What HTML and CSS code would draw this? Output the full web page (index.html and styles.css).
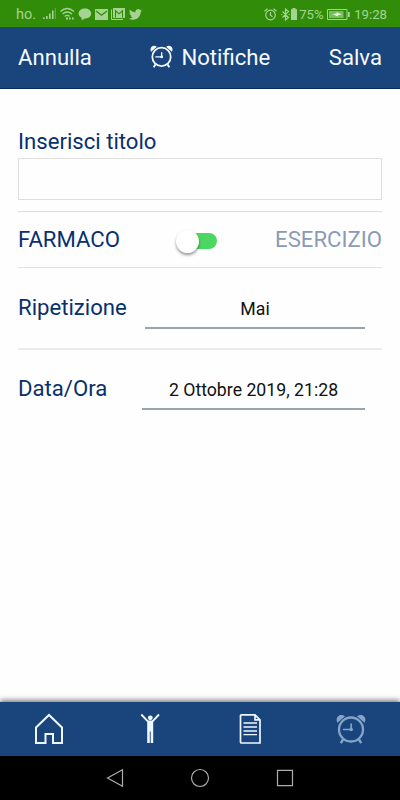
FILE: index.html
```html
<!DOCTYPE html>
<html lang="it">
<head>
<meta charset="utf-8">
<title>Notifiche</title>
<link rel="stylesheet" href="styles.css">
</head>
<body>
<svg class="defs" width="0" height="0">
  <symbol id="alarm" viewBox="0 0 30 30">
    <circle cx="15" cy="15.5" r="12" fill="none" stroke="currentColor" stroke-width="2.3"/>
    <path d="M15.2 9.5v6H7" fill="none" stroke="currentColor" stroke-width="1.7"/>
    <circle cx="15.2" cy="15.5" r="1.8" fill="currentColor"/>
    <path d="M1.500 8.800C-1.500 3.500 4 -1.500 9 2.200ZM28.500 8.800C31.500 3.500 26 -1.500 21 2.200Z" fill="currentColor"/>
    <path d="M7 25.5l-2.200 3.600M23 25.5l2.200 3.600" stroke="currentColor" stroke-width="2.4"/>
  </symbol>
</svg>
<div class="screen">
  <div class="status">
    <span class="carrier">ho.</span>
    <svg class="signal" width="14" height="12" viewBox="0 0 14 12" fill="currentColor"><path d="M0 9.5h1.6V11H0zM3 8h1.6v3H3zM6 5.5h1.6V11H6zM9 2.5h1.6V11H9z"/><path d="M11.8 0h1V11h-1z" opacity=".5"/></svg>
    <svg class="wifi" width="16" height="14" viewBox="0 0 16 14" fill="none" stroke="currentColor" stroke-width="1.4"><path d="M.5 4.5Q7 -1.5 14 4.5M2.6 7Q7 3 12 7M4.8 9.4Q7 7.4 9.6 9.4"/><path d="M6 11.5h2M9 11.5h1.7M12 11.5h1.7" stroke-width="2"/></svg>
    <svg class="chat" width="14" height="13" viewBox="0 0 14 13" fill="currentColor"><path d="M7 .5c3.6 0 6.2 2.1 6.2 5S10.600 10.600 6.600 10.500L3.800 12.500 3.600 9.700C1.900 8.900.6 7.400.6 5.500.6 2.600 3.400.5 7 .5Z"/></svg>
    <svg class="mail" width="13" height="11" viewBox="0 0 13 11"><path fill="currentColor" d="M0 0h13v11H0z"/><path d="M1 2l5.500 4.200L12 2" fill="none" stroke="#318d09" stroke-width="1.300"/></svg>
    <svg class="gmail" width="14" height="12" viewBox="0 0 14 12" fill="none" stroke="currentColor"><path d="M.5 1.500v10H12"/><path fill="currentColor" stroke="none" d="M2 0h12v10H2z"/><path d="M4.500 9.500V2.800L8 5.800l3.500-3v6.700" stroke="#318d09" stroke-width="1.100"/></svg>
    <svg class="bird" width="13" height="11" viewBox="0 0 24 20" fill="currentColor"><path d="M24 2.400c-.9.4-1.800.7-2.800.8 1-.6 1.800-1.600 2.200-2.700-1 .6-2 1-3.100 1.200A4.920 4.920 0 0 0 11.900 6.200C7.800 6 4.200 4 1.700.9c-1.300 2.200-.7 5.100 1.500 6.600-.8 0-1.600-.2-2.200-.6 0 2.300 1.600 4.400 3.900 4.900-.7.2-1.500.2-2.200.1.600 2 2.400 3.400 4.600 3.400A9.900 9.900 0 0 1 0 17.300c2.200 1.400 4.800 2.200 7.500 2.200 9.100 0 14.300-7.700 14-14.600 1-.7 1.800-1.600 2.500-2.500Z"/></svg>
    <div class="system">
      <svg width="13" height="13" viewBox="0 0 13 13" fill="none" stroke="currentColor" stroke-width="1.200"><circle cx="6.500" cy="7" r="4.800"/><path d="M6.500 4v3.300l2 1.500M.5 3.200l3-2.400M12.500 3.200l-3-2.400"/></svg>
      <svg class="bt" width="9" height="13" viewBox="0 0 9 13" fill="none" stroke="currentColor"><path d="M1.500 3.500l6 6L4.500 12V1l3 2.500-6 6M.2 6.500h1.100M7.700 6.500h1.100" stroke-width="1.200"/></svg>
      <svg class="cell" width="6" height="12" viewBox="0 0 6 12" fill="currentColor"><path d="M1.500 0h3v1.200H6V12H0V1.200h1.500z"/></svg>
      <span class="pct">75%</span>
      <svg class="batt" width="23" height="11" viewBox="0 0 23 11"><path d="M.5.500h19.500v10H.5z" fill="none" stroke="currentColor"/><path d="M2 2h14.500v7H2z" fill="currentColor" opacity=".65"/><path d="M21 3h1.800v5H21z" fill="currentColor"/><path d="M5.500 5.200l4-.7V3.300L15 5.500l-4 .7V7.600z" fill="#e2f5d6"/></svg>
      <span class="time">19:28</span>
    </div>
  </div>
  <header class="bar">
    <span>Annulla</span>
    <span class="title"><svg width="23" height="23"><use href="#alarm"/></svg>Notifiche</span>
    <span>Salva</span>
  </header>
  <main class="form">
    <label class="label" for="titolo">Inserisci titolo</label>
    <input class="input" id="titolo" type="text">
    <div class="row kind">
      <span class="name">FARMACO</span>
      <span class="toggle"><span class="knob"></span></span>
      <span class="name off">ESERCIZIO</span>
    </div>
    <div class="row repeat"><span class="name">Ripetizione</span><span class="value short">Mai</span></div>
    <div class="row date"><span class="name">Data/Ora</span><span class="value">2 Ottobre 2019, 21:28</span></div>
  </main>
  <nav class="tabs">
    <span class="home"><svg width="30" height="32" viewBox="0 0 30 32" fill="none" stroke="currentColor" stroke-width="2"><path d="M2 14.500L15 2l13 12.500V30h-9v-9h-7.500v9H2z"/></svg></span>
    <span><svg width="20" height="32" viewBox="0 0 20 32"><circle cx="10.300" cy="4.800" r="2.400" fill="currentColor"/><path d="M1.300 1.500l6.500 6.800M19 1.500l-6.500 6.800" stroke="currentColor" stroke-width="1.900"/><path d="M7.200 7.500h6V30h-2.500V18.500h-.9V30H7.200z" fill="currentColor"/></svg></span>
    <span><svg width="24" height="32" viewBox="0 0 24 32" fill="none" stroke="currentColor" stroke-width="1.700"><path d="M3.500 1.800h13.500l5 5V30h-18.500a1 1 0 0 1-1-1V2.800a1 1 0 0 1 1-1zM17 1.800v5h5"/><path d="M5.500 10h13.500M5.500 14h13.500M5.500 18h13.500M5.500 21.700h13.500" stroke-width="1.300"/></svg></span>
    <span class="current"><svg width="30" height="30"><use href="#alarm"/></svg></span>
  </nav>
  <div class="system-nav">
    <svg width="18" height="20" viewBox="0 0 18 20"><path d="M1.500 10L16.500 1.700v16.600z"/></svg>
    <svg width="20" height="20" viewBox="0 0 20 20"><circle cx="10" cy="10" r="8.500"/></svg>
    <svg width="18" height="20" viewBox="0 0 18 20"><path d="M1.500 2.300h15v15.400h-15z"/></svg>
  </div>
</div>
</body>
</html>
```
FILE: styles.css
```css
* { box-sizing: border-box; }
body { margin: 0; font-family: Roboto, sans-serif; background: #fefefe; }
.defs { position: absolute; }
svg { display: block; flex: none; }
.screen { width: 400px; height: 800px; display: flex; flex-direction: column; overflow: hidden; }

.status { height: 27px; background: #318d09; color: #a5d492; display: flex; align-items: center; padding: 1px 13px 0 16px; font-size: 14px; white-space: nowrap; }
.carrier { width: 27px; font-size: 14.5px; }
.wifi { margin-left: 3px; }
.chat { margin-left: 2px; }
.mail { margin-left: 3px; }
.gmail { margin-left: 3px; }
.bird { margin-left: 4px; }
.system { margin-left: auto; display: flex; align-items: center; }
.bt { margin-left: 4px; }
.cell { margin-left: 1px; }
.pct { width: 24px; margin-left: 2px; margin-right: 1px; font-size: 13.2px; }
.batt { margin-left: 3px; }
.time { margin-left: 4px; font-size: 13.2px; }

.bar { height: 62px; background: #19457c; border-bottom: 1px solid #0c2b5c; color: #f5faff; display: flex; align-items: center; justify-content: space-between; padding: 0 18px 2px; font-size: 22.15px; }
.title { display: flex; align-items: center; gap: 8px; }

.form { flex: 1; padding: 38px 18px 0; color: #08306f; font-size: 22.15px; }
.label { display: block; height: 31px; line-height: 28px; }
.input { display: block; width: 100%; height: 42px; border: 1px solid #dedede; border-radius: 0; background: #fefefe; margin-bottom: 11px; font: inherit; }
.row { display: flex; justify-content: space-between; align-items: center; border-top: 1px solid #dcdcdc; }
.name { margin-bottom: 2px; }
.kind { height: 56px; }
.off { color: #8b9bb6; }
.toggle { width: 37px; height: 16px; border-radius: 8px; background: #4bd762; display: flex; align-items: center; margin-top: 3px; margin-left: 1px; }
.knob { width: 23px; height: 23px; margin-left: -4px; flex: none; border-radius: 50%; background: #fff; box-shadow: 0 2px 3px rgba(0,0,0,.4); }
.repeat { height: 81px; border-top-color: #e2e2e2; }
.date { height: 80px; border-top: 2px solid #ebebeb; }
.value { width: 223px; height: 40px; line-height: 41px; border-bottom: 2px solid #94a5b3; color: #111; font-size: 17.7px; text-align: center; margin: 1px 17px 0 0; }
.short { width: 220px; }

.tabs { height: 54px; background: #19457c; box-shadow: 0 -2px 5px rgba(0,0,0,.5); color: #eef7ff; display: grid; grid-template-columns: repeat(4, 1fr); place-items: center; padding: 0 0 1px; }
.home { margin-right: 2px; }
.current { color: #84a5ca; margin-left: 1px; }
.system-nav { height: 44px; background: #000; display: flex; align-items: center; justify-content: center; gap: 66px; fill: none; stroke: #adadad; stroke-width: 1.2; }
```
